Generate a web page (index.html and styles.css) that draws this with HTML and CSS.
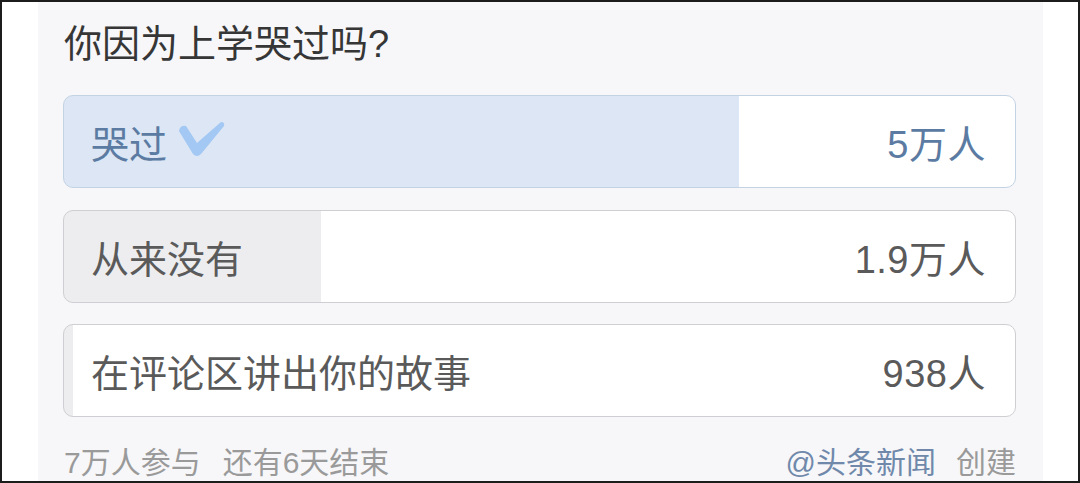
FILE: index.html
```html
<!DOCTYPE html>
<html lang="zh-CN">
<head>
<meta charset="utf-8">
<title>投票</title>
<link rel="stylesheet" href="styles.css">
</head>
<body>
<div class="frame">
  <div class="panel">
    <div class="title">你因为上学哭过吗?</div>
    <div class="options">
      <div class="option voted" style="--p: 71%">
        <span class="label">哭过<svg class="check" width="48" height="38" viewBox="0 0 48 38"><path d="M1,10 Q2,4 8,5 L19,22 L43,1 Q47,1 46,5 L23,33 Q19,37 15,33 Z" fill="#a2c8f3"/></svg></span>
        <span class="count">5万人</span>
      </div>
      <div class="option" style="--p: 27%">
        <span class="label">从来没有</span>
        <span class="count">1.9万人</span>
      </div>
      <div class="option" style="--p: 0.9%">
        <span class="label">在评论区讲出你的故事</span>
        <span class="count">938人</span>
      </div>
    </div>
    <div class="footer">
      <span class="stats">7万人参与<span class="sep"></span>还有6天结束</span>
      <span class="author"><span class="name">@头条新闻</span><span class="sep2"></span>创建</span>
    </div>
  </div>
</div>
</body>
</html>
```
FILE: styles.css
```css
html, body {
  margin: 0;
  padding: 0;
  background: #ffffff;
}
body {
  font-family: "Liberation Sans", "Noto Sans CJK SC", sans-serif;
}
.frame {
  width: 1080px;
  height: 483px;
  box-sizing: border-box;
  border: 2px solid #1c1c1c;
  background: #ffffff;
  overflow: hidden;
}
.panel {
  margin-left: 36px;
  width: 1005px;
  height: 100%;
  box-sizing: border-box;
  background: #f7f7f9;
  padding: 17px 27px 0 25px;
}
.title {
  font-size: 38px;
  line-height: 50px;
  color: #363636;
  padding-left: 1px;
}
.options {
  margin-top: 26px;
  display: flex;
  flex-direction: column;
  gap: 21.5px;
}
.option {
  height: 93px;
  box-sizing: border-box;
  border: 1px solid #cfcfd3;
  border-radius: 10px;
  display: flex;
  align-items: center;
  justify-content: space-between;
  padding: 0 29px 0 27px;
  font-size: 38px;
  color: #5a5a5a;
  background: linear-gradient(to right, #ededf0 0, #ededf0 var(--p), #ffffff var(--p), #ffffff 100%);
}
.option.voted {
  border-color: #c3d3e4;
  color: #5b7ba2;
  background: linear-gradient(to right, #dce6f4 0, #dce6f4 var(--p), #ffffff var(--p), #ffffff 100%);
}
.label {
  display: flex;
  align-items: center;
}
.check {
  margin-left: 11px;
  margin-top: -4px;
}
.count {
  letter-spacing: 0.5px;
}
.footer {
  margin-top: 26px;
  display: flex;
  justify-content: space-between;
  font-size: 30px;
  line-height: 40px;
  color: #9a9a9a;
  padding-left: 1px;
}
.sep {
  display: inline-block;
  width: 22px;
}
.sep2 {
  display: inline-block;
  width: 20px;
}
.name {
  color: #7089ab;
}
```
